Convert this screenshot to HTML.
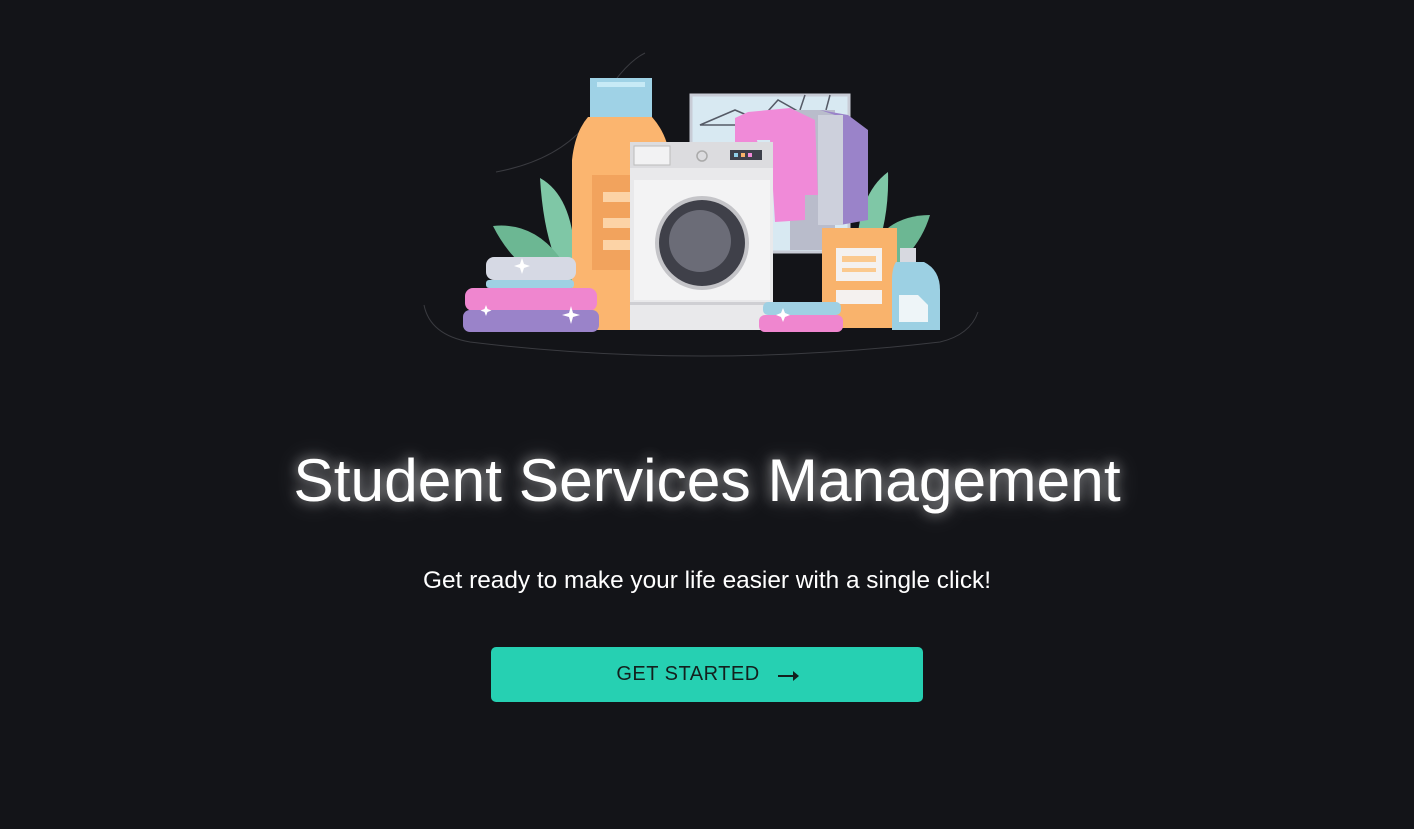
<!DOCTYPE html>
<html><head><meta charset="utf-8"><style>
html,body{margin:0;padding:0;background:#131418;width:1414px;height:829px;overflow:hidden;font-family:"Liberation Sans",Arial,sans-serif}
svg{position:absolute;left:0;top:0}
h1{position:absolute;left:0;width:1414px;top:442px;margin:0;text-align:center;color:#fff;font-weight:400;font-size:60.5px;line-height:76px;text-shadow:0 0 12px rgba(255,255,255,.55),0 0 26px rgba(255,255,255,.3)}
p{position:absolute;left:0;width:1414px;top:566px;margin:0;text-align:center;color:#fff;font-size:24.4px;line-height:30px}
.btn{position:absolute;left:491px;top:647px;width:432px;height:55px;background:#26d0b2;border-radius:5px;color:#13201e;font-size:20px;letter-spacing:.5px;display:flex;align-items:center;justify-content:center}
.btn span{margin-left:18px;display:inline-block;width:20px;height:2px;background:#13201e;position:relative;top:1px}
.btn span:after{content:"";position:absolute;right:-1px;top:-4px;border-left:6px solid #13201e;border-top:5px solid transparent;border-bottom:5px solid transparent}
</style></head><body>
<svg width="1414" height="829" viewBox="0 0 1414 829">
<path d="M424 305 Q430 335 470 342 Q700 370 940 342 Q970 335 978 312" fill="none" stroke="#3a3b40" stroke-width="1"/>
<path d="M496 172 Q560 160 590 120 Q620 65 645 53" fill="none" stroke="#3a3b40" stroke-width="1"/>
<path d="M540 178 Q580 200 575 290 Q545 260 540 178Z" fill="#7fc7a6"/>
<path d="M493 226 Q550 220 580 295 Q520 280 493 226Z" fill="#6cb793"/>
<path d="M888 172 Q850 200 858 285 Q890 240 888 172Z" fill="#7fc7a6"/>
<path d="M930 215 Q870 215 855 290 Q915 265 930 215Z" fill="#6cb793"/>
<rect x="691" y="95" width="158" height="157" fill="#d8e9f2" stroke="#c8ccd6" stroke-width="3"/>
<path d="M700 125 L735 110 L770 125Z M760 120 L778 100 L810 118 M800 110 L805 95 M826 110 L830 95" fill="none" stroke="#555a66" stroke-width="1.5"/>
<rect x="790" y="110" width="45" height="140" fill="#b9bccb"/>
<path d="M820 110 L848 115 L868 130 L868 220 L840 225 L835 115Z" fill="#9a83c9"/>
<rect x="818" y="115" width="25" height="110" fill="#cdd0dc"/>
<path d="M748 112 L790 108 L815 120 L818 195 L805 195 L805 220 L775 222 L770 140 L748 140Z" fill="#f08ad8"/>
<path d="M735 118 L748 112 L760 150 L735 150Z" fill="#f08ad8"/>
<rect x="590" y="78" width="62" height="40" fill="#9fd2e6"/>
<rect x="597" y="82" width="48" height="5" fill="#c7eaf6"/>
<path d="M588 117 L652 117 Q668 135 670 160 L670 330 L572 330 L572 160 Q575 132 588 117Z" fill="#fbb56f"/>
<rect x="592" y="175" width="40" height="95" fill="#f2a35d"/>
<rect x="603" y="192" width="28" height="10" fill="#fcd3a6"/>
<rect x="603" y="218" width="28" height="10" fill="#fcd3a6"/>
<rect x="603" y="240" width="28" height="10" fill="#fcd3a6"/>
<rect x="630" y="142" width="143" height="188" fill="#e9e9eb"/>
<rect x="630" y="142" width="143" height="26" fill="#dcdcdf"/>
<rect x="634" y="146" width="36" height="19" fill="#f2f2f3" stroke="#bbb" stroke-width="1"/>
<circle cx="702" cy="156" r="5" fill="none" stroke="#aaa" stroke-width="1.5"/>
<rect x="730" y="150" width="32" height="10" fill="#3d3f4a"/>
<rect x="734" y="153" width="4" height="4" fill="#8fcde6"/><rect x="741" y="153" width="4" height="4" fill="#f7b26a"/><rect x="748" y="153" width="4" height="4" fill="#f08ad8"/>
<rect x="634" y="180" width="136" height="120" fill="#f3f3f4"/>
<circle cx="702" cy="243" r="47" fill="#c4c4c8"/>
<circle cx="702" cy="243" r="43" fill="#3f4049"/>
<circle cx="700" cy="241" r="31" fill="#6b6c77"/>
<rect x="630" y="302" width="143" height="3" fill="#cfcfd3"/>
<rect x="822" y="228" width="75" height="100" fill="#f9b36c"/>
<rect x="836" y="248" width="46" height="33" fill="#f4f1ef"/>
<rect x="842" y="256" width="34" height="6" fill="#fbc98e"/>
<rect x="842" y="268" width="34" height="4" fill="#fbc98e"/>
<rect x="836" y="290" width="46" height="14" fill="#f4f1ef"/>
<rect x="900" y="248" width="16" height="15" fill="#d7d9e0"/>
<path d="M896 262 L924 262 Q940 270 940 290 L940 330 L892 330 L892 280 Q892 268 896 262Z" fill="#9cd0e3"/>
<path d="M899 295 L918 295 L928 305 L928 322 L899 322Z" fill="#eef5f8"/>
<rect x="486" y="257" width="90" height="23" rx="8" fill="#d6d9e4"/>
<rect x="486" y="280" width="88" height="8" rx="3" fill="#9fd0e3"/>
<rect x="465" y="288" width="132" height="23" rx="8" fill="#ef86cf"/>
<rect x="463" y="310" width="136" height="22" rx="7" fill="#9a83c9"/>
<rect x="763" y="302" width="78" height="13" rx="5" fill="#9fd0e3"/>
<rect x="759" y="315" width="84" height="17" rx="6" fill="#ef86cf"/>
<g fill="#fff"><path d="M522 258 l2 6 6 2 -6 2 -2 6 -2 -6 -6 -2 6 -2z"/><path d="M571 306 l2 7 7 2 -7 2 -2 7 -2 -7 -7 -2 7 -2z"/><path d="M486 305 l1.5 4 4 1.5 -4 1.5 -1.5 4 -1.5 -4 -4 -1.5 4 -1.5z"/><path d="M783 308 l2 5 5 2 -5 2 -2 5 -2 -5 -5 -2 5 -2z"/></g>
</svg>
<h1>Student Services Management</h1>
<p>Get ready to make your life easier with a single click!</p>
<div class="btn">GET STARTED<span></span></div>
</body></html>
